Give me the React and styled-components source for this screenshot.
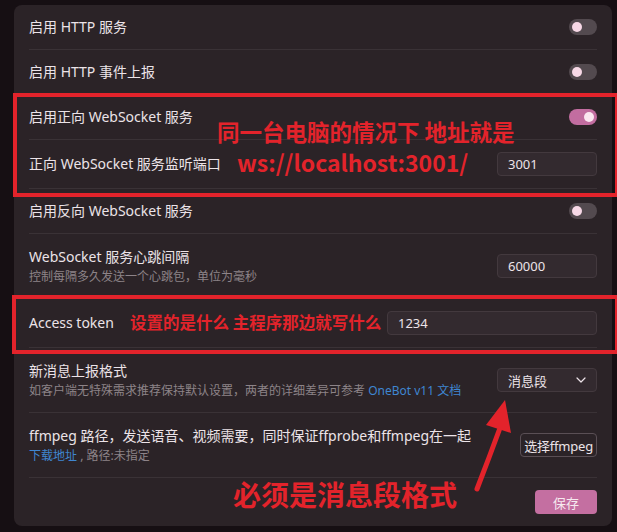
import React from "react";
import styled, { createGlobalStyle } from "styled-components";

const Global = createGlobalStyle`
  html, body { margin: 0; padding: 0; background: #160f13; }
  body { font-family: "Noto Sans", "Noto Sans CJK SC", sans-serif; color: #ece3e8; }
  * { box-sizing: border-box; }
`;

const Page = styled.div`
  position: relative;
  width: 617px;
  height: 532px;
  overflow: hidden;
  padding: 5px 5px 0 14px;
`;

const Card = styled.div`
  background: #2b2327;
  border-radius: 8px;
  padding: 0 15px;
  height: 521px;
`;

const Row = styled.div`
  display: flex;
  align-items: center;
  justify-content: space-between;
  gap: 12px;
  height: ${(p) => p.$h}px;
  border-bottom: ${(p) => (p.$last ? "none" : "1px solid #3a3236")};
`;

const TextBlock = styled.div`
  display: flex;
  flex-direction: column;
  gap: 1px;
`;

const Label = styled.div`
  font-size: 14px;
  line-height: 20px;
  color: #ece3e8;
  white-space: nowrap;
`;

const Sub = styled.div`
  font-size: 12px;
  line-height: 18px;
  color: #8d8388;
  white-space: nowrap;
`;

const Link = styled.span`
  color: #3f86d1;
`;

const Track = styled.div`
  width: 28px;
  height: 16px;
  border-radius: 8px;
  background: ${(p) => (p.$on ? "#c26da0" : "#534a4f")};
  display: flex;
  align-items: center;
  justify-content: ${(p) => (p.$on ? "flex-end" : "flex-start")};
  padding: 0 3px;
  flex-shrink: 0;
`;

const Knob = styled.div`
  width: 10px;
  height: 10px;
  border-radius: 50%;
  background: ${(p) => (p.$on ? "#fbe6f0" : "#f7d8e6")};
`;

const Toggle = ({ on }) => (
  <Track $on={on}>
    <Knob $on={on} />
  </Track>
);

const Input = styled.div`
  width: ${(p) => p.$w}px;
  height: 24px;
  border-radius: 4px;
  background: #332a2f;
  border: 1px solid #43393e;
  font-size: 13px;
  color: #ece3e8;
  display: flex;
  align-items: center;
  justify-content: space-between;
  padding: 0 10px;
  flex-shrink: 0;
`;

const OutlineButton = styled.div`
  height: 24px;
  padding: 0 3px;
  border-radius: 4px;
  border: 1px solid #5a4f55;
  font-size: 13px;
  letter-spacing: -0.2px;
  color: #ece3e8;
  display: flex;
  align-items: center;
  flex-shrink: 0;
`;

const SaveButton = styled.div`
  width: 62px;
  height: 24px;
  border-radius: 4px;
  background: #c46fa1;
  color: #f6e9ef;
  font-size: 13px;
  display: flex;
  align-items: center;
  justify-content: center;
  margin-left: auto;
`;

const RedBox = styled.div`
  position: absolute;
  left: ${(p) => p.$x}px;
  top: ${(p) => p.$y}px;
  width: ${(p) => p.$w}px;
  height: ${(p) => p.$h}px;
  border: 4px solid #e3232b;
  pointer-events: none;
`;

const Note = styled.div`
  position: absolute;
  left: ${(p) => p.$x}px;
  top: ${(p) => p.$y}px;
  font-size: ${(p) => p.$s}px;
  line-height: 1;
  font-weight: 700;
  color: #e3232b;
  white-space: nowrap;
  font-family: "Noto Sans CJK SC", "Noto Sans", sans-serif;
`;

const Overlay = styled.svg`
  position: absolute;
  left: 0;
  top: 0;
  pointer-events: none;
`;

const Chevron = () => (
  <svg width="10" height="6" viewBox="0 0 10 6">
    <path d="M1 1 L5 5 L9 1" fill="none" stroke="#ece3e8" strokeWidth="1.2" strokeLinecap="round" strokeLinejoin="round" />
  </svg>
);

export default function App() {
  return (
    <>
      <Global />
      <Page>
        <Card>
          <Row $h={45}>
            <Label>启用 HTTP 服务</Label>
            <Toggle />
          </Row>
          <Row $h={45}>
            <Label>启用 HTTP 事件上报</Label>
            <Toggle />
          </Row>
          <Row $h={45}>
            <Label>启用正向 WebSocket 服务</Label>
            <Toggle on />
          </Row>
          <Row $h={49}>
            <Label>正向 WebSocket 服务监听端口</Label>
            <Input $w={100}>3001</Input>
          </Row>
          <Row $h={45}>
            <Label>启用反向 WebSocket 服务</Label>
            <Toggle />
          </Row>
          <Row $h={65}>
            <TextBlock>
              <Label>WebSocket 服务心跳间隔</Label>
              <Sub>控制每隔多久发送一个心跳包，单位为毫秒</Sub>
            </TextBlock>
            <Input $w={100}>60000</Input>
          </Row>
          <Row $h={49}>
            <Label>Access token</Label>
            <Input $w={210}>1234</Input>
          </Row>
          <Row $h={65}>
            <TextBlock>
              <Label>新消息上报格式</Label>
              <Sub>
                如客户端无特殊需求推荐保持默认设置，两者的详细差异可参考 <Link>OneBot v11 文档</Link>
              </Sub>
            </TextBlock>
            <Input $w={100}>
              消息段
              <Chevron />
            </Input>
          </Row>
          <Row $h={65}>
            <TextBlock>
              <Label>ffmpeg 路径，发送语音、视频需要，同时保证ffprobe和ffmpeg在一起</Label>
              <Sub>
                <Link>下载地址</Link> , 路径:未指定
              </Sub>
            </TextBlock>
            <OutlineButton>选择ffmpeg</OutlineButton>
          </Row>
          <Row $h={48} $last>
            <SaveButton>保存</SaveButton>
          </Row>
        </Card>

        <RedBox $x={13} $y={93} $w={606} $h={104} />
        <RedBox $x={12} $y={295} $w={607} $h={59} />
        <Note $x={217} $y={120} $s={22.5}>同一台电脑的情况下 地址就是</Note>
        <Note $x={237} $y={151} $s={23}>ws://localhost:3001/</Note>
        <Note $x={130} $y={314} $s={16.5}>设置的是什么 主程序那边就写什么</Note>
        <Note $x={233} $y={480} $s={28}>必须是消息段格式</Note>
        <Overlay width="617" height="532" viewBox="0 0 617 532">
          <path d="M477 489 Q489 458 500 428" fill="none" stroke="#e3232b" strokeWidth="5" strokeLinecap="round" />
          <polygon points="505,400 486,425 511,433" fill="#e3232b" />
        </Overlay>
      </Page>
    </>
  );
}
